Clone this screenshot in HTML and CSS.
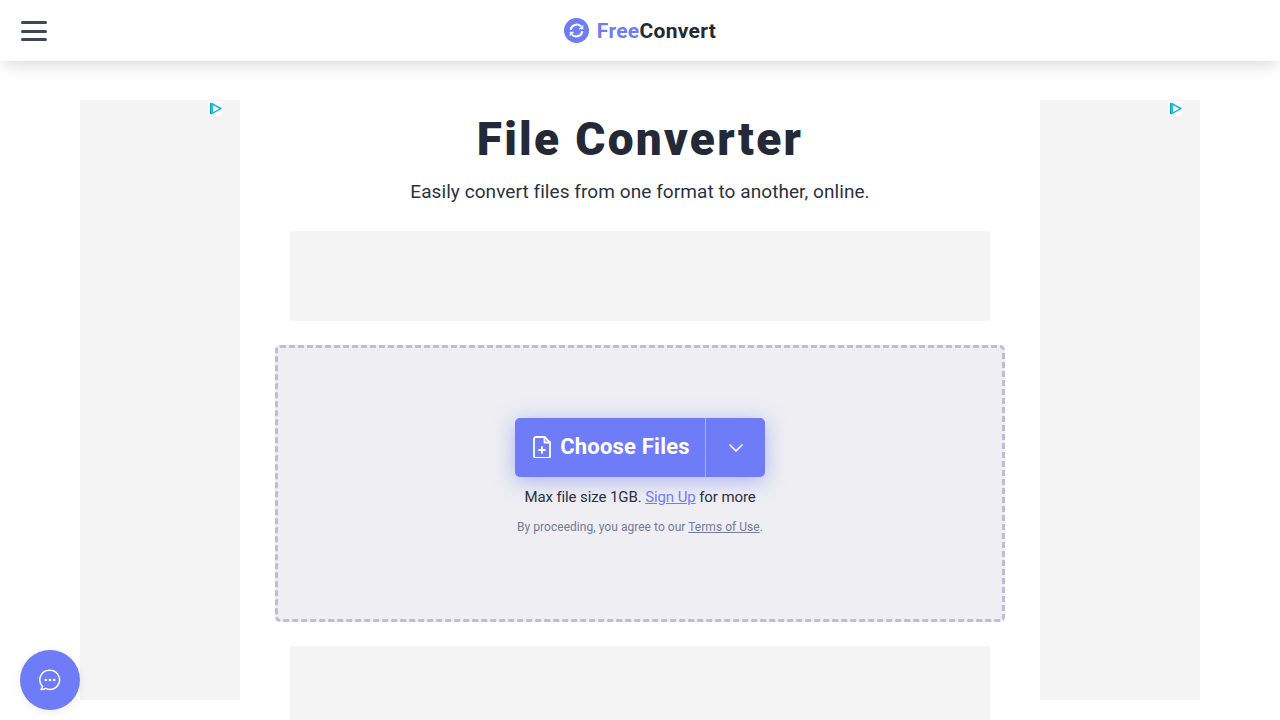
FILE: index.html
```html
<!DOCTYPE html>
<html lang="en">
<head>
    <meta charset="UTF-8">
    <meta name="viewport" content="width=device-width, initial-scale=1.0">
    <title>File Converter</title>
    <link rel="stylesheet" href="styles.css">
</head>
<body>
    <header class="topbar">
        <button class="menu-btn" aria-label="Menu">
            <span></span><span></span><span></span>
        </button>
        <a class="logo" href="#">
            <svg class="logo-icon" viewBox="0 0 26 26" width="25" height="25">
                <circle cx="13" cy="13" r="13" fill="#6f7cf7"/>
                <path d="M7 12.400a6.200 6.200 0 0 1 10.600-3.700" fill="none" stroke="#fff" stroke-width="2.200"/>
                <path d="M19 13.600a6.200 6.200 0 0 1-10.600 3.700" fill="none" stroke="#fff" stroke-width="2.200"/>
                <path d="M20 7v4.800h-4.800z M6 19v-4.800h4.800z" fill="#fff"/>
            </svg>
            <span class="logo-text"><span class="logo-free">Free</span>Convert</span>
        </a>
    </header>

    <div class="page">
        <aside class="side-ad">
            <svg class="ad-mark" viewBox="0 0 15 15" width="15" height="15">
                <rect width="15" height="15" fill="#fff"/>
                <path d="M4.200 2.800v9.600l8.600-4.800z" fill="none" stroke="#00bcd4" stroke-width="1.400"/>
                <path d="M2.800 2v11.200" stroke="#00a5dc" stroke-width="1.600"/>
            </svg>
        </aside>

        <main class="content">
            <h1>File Converter</h1>
            <p class="subtitle">Easily convert files from one format to another, online.</p>
            <div class="banner-ad"></div>

            <section class="dropzone">
                <div class="upload-btn">
                    <button class="choose-btn">
                        <svg viewBox="0 0 18 22" width="18" height="22" fill="none" stroke="#fff" stroke-width="1.800" stroke-linejoin="round" stroke-linecap="round">
                            <path d="M3 1h8.500l5.500 5.500v13.500a2 2 0 0 1-2 2h-12a2 2 0 0 1-2-2v-17a2 2 0 0 1 2-2z"/>
                            <path d="M11.500 1v5.500h5.500"/>
                            <path d="M9 11v6M6 14h6"/>
                        </svg>
                        Choose Files
                    </button>
                    <button class="more-btn" aria-label="More sources">
                        <svg viewBox="0 0 16 10" width="16" height="10" fill="none" stroke="#fff" stroke-width="1.700" stroke-linecap="round" stroke-linejoin="round">
                            <path d="M2 2l6 6 6-6"/>
                        </svg>
                    </button>
                </div>
                <p class="limit">Max file size 1GB. <a href="#">Sign Up</a> for more</p>
                <p class="terms">By proceeding, you agree to our <a href="#">Terms of Use</a>.</p>
            </section>

            <div class="banner-ad banner-low"></div>
        </main>

        <aside class="side-ad">
            <svg class="ad-mark" viewBox="0 0 15 15" width="15" height="15">
                <rect width="15" height="15" fill="#fff"/>
                <path d="M4.200 2.800v9.600l8.600-4.800z" fill="none" stroke="#00bcd4" stroke-width="1.400"/>
                <path d="M2.800 2v11.200" stroke="#00a5dc" stroke-width="1.600"/>
            </svg>
        </aside>
    </div>

    <button class="chat-btn" aria-label="Chat">
        <svg viewBox="0 0 24 24" width="24" height="24">
            <path d="M12 2.200a9.600 9.600 0 1 1-4.300 18.200c-1.300.8-3 1.200-4.700 1 .9-.8 1.400-1.800 1.500-3A9.600 9.600 0 0 1 12 2.200z" fill="none" stroke="#fff" stroke-width="1.500" stroke-linejoin="round"/>
            <circle cx="7.800" cy="12" r="1.300" fill="#fff"/>
            <circle cx="12" cy="12" r="1.300" fill="#fff"/>
            <circle cx="16.200" cy="12" r="1.300" fill="#fff"/>
        </svg>
    </button>
</body>
</html>
```

FILE: styles.css
```css
html, body {
    height: 100%;
    overflow: hidden;
}
body {
    margin: 0;
    padding: 0;
    font-family: Roboto, "Liberation Sans", sans-serif;
    color: #232936;
    background-color: #fff;
}
.topbar {
    height: 61px;
    display: flex;
    align-items: center;
    justify-content: center;
    position: relative;
    background-color: #fff;
    box-shadow: 0 6px 18px -4px rgba(0, 0, 0, 0.18);
}
.menu-btn {
    position: absolute;
    left: 21px;
    top: 21px;
    width: 26px;
    height: 20px;
    padding: 0;
    border: none;
    background: none;
    display: flex;
    flex-direction: column;
    justify-content: space-between;
}
.menu-btn span {
    display: block;
    height: 3px;
    border-radius: 2px;
    background-color: #3f4753;
}
.logo {
    display: flex;
    align-items: center;
    gap: 8px;
    text-decoration: none;
    color: #232936;
}
.logo-text {
    font-size: 21px;
    font-weight: 700;
    letter-spacing: 0.3px;
}
.logo-free {
    color: #6f7cf7;
}
.page {
    display: flex;
    justify-content: center;
    padding-top: 39px;
}
.side-ad {
    width: 160px;
    height: 600px;
    position: relative;
    background-color: #f4f4f5;
}
.ad-mark {
    position: absolute;
    top: 1px;
    right: 17px;
}
.content {
    width: 800px;
    display: flex;
    flex-direction: column;
    align-items: center;
}
h1 {
    margin: 11px 0 0;
    font-size: 46px;
    line-height: 56px;
    font-weight: 900;
    letter-spacing: 2.3px;
}
.subtitle {
    margin: 11px 0 0;
    font-size: 19px;
    line-height: 28px;
    letter-spacing: 0.07px;
    color: #2b3140;
}
.banner-ad {
    width: 700px;
    height: 90px;
    margin-top: 25px;
    flex-shrink: 0;
    background-color: #f4f4f5;
}
.banner-low {
    margin-top: 24px;
}
.dropzone {
    width: 730px;
    height: 277px;
    margin-top: 24px;
    box-sizing: border-box;
    flex-shrink: 0;
    padding-top: 70px;
    display: flex;
    flex-direction: column;
    align-items: center;
    border: 3px dashed #bfbcd8;
    border-radius: 5px;
    background-color: #eeeef3;
}
.upload-btn {
    display: flex;
    height: 59px;
    border-radius: 5px;
    background-color: #6f7cf7;
    box-shadow: 0 4px 20px rgba(111, 124, 247, 0.5);
}
.upload-btn button {
    border: none;
    background: none;
    color: #fff;
    font-family: inherit;
    display: flex;
    align-items: center;
    justify-content: center;
}
.choose-btn {
    width: 190px;
    gap: 9px;
    padding: 0 0 2px 3px;
    font-size: 22px;
    font-weight: 700;
    letter-spacing: 0.2px;
}
.more-btn {
    width: 60px;
    padding: 0;
    border-left: 1px solid rgba(255, 255, 255, 0.4) !important;
}
.limit {
    margin: 10px 0 0;
    font-size: 15px;
    line-height: 20px;
    letter-spacing: -0.1px;
    color: #2b3140;
}
.limit a {
    color: #6f7cf7;
}
.terms {
    margin: 12px 0 0;
    font-size: 12px;
    line-height: 16px;
    letter-spacing: 0.04px;
    color: #757c96;
}
.terms a {
    color: #757c96;
}
.chat-btn {
    position: fixed;
    left: 20px;
    bottom: 10px;
    width: 60px;
    height: 60px;
    padding: 0;
    border: none;
    border-radius: 50%;
    display: flex;
    align-items: center;
    justify-content: center;
    background-color: #6f7cf7;
    box-shadow: 0 2px 10px rgba(0, 0, 0, 0.08);
}
```
